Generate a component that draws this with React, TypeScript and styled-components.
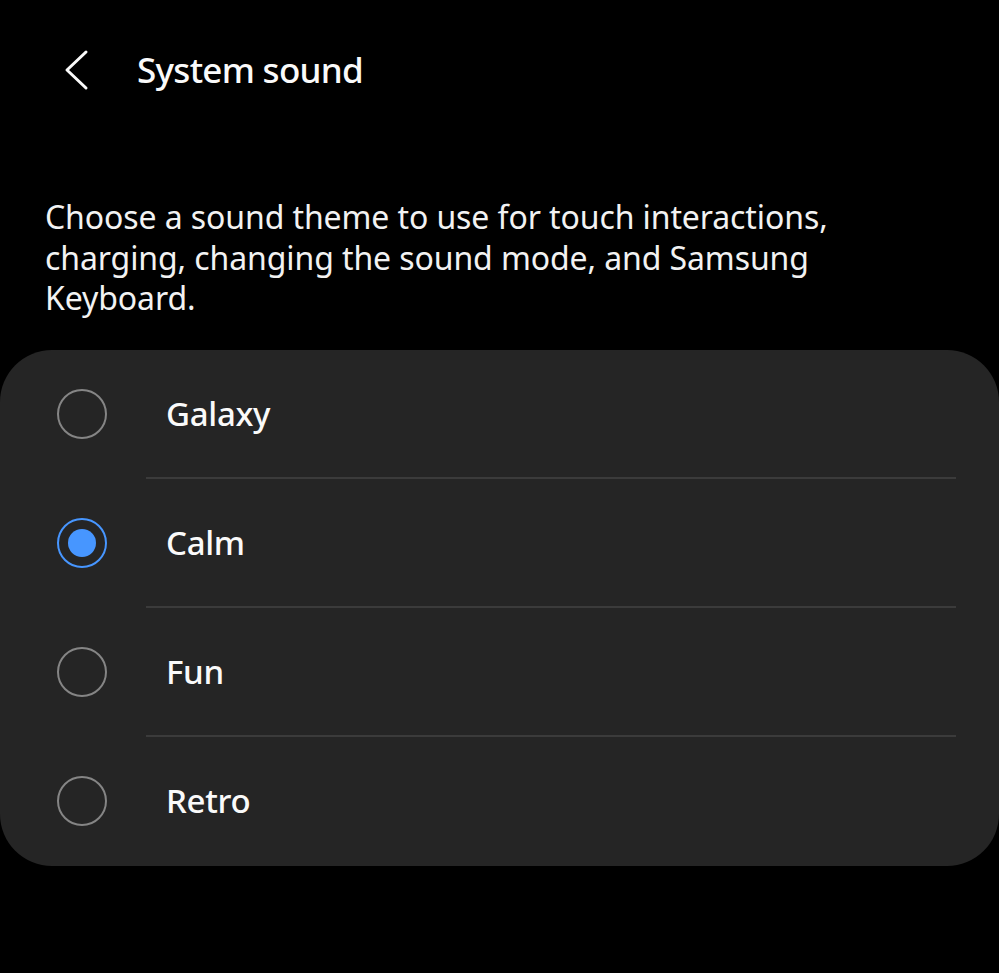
import React, { useState } from "react";
import styled, { createGlobalStyle } from "styled-components";

const Global = createGlobalStyle`
  html, body { margin: 0; padding: 0; background: #000; }
  body { font-family: "Noto Sans", "Open Sans", sans-serif; color: #fafafa; }
  * { box-sizing: border-box; }
`;

const Page = styled.div`
  width: 999px;
  height: 973px;
  background: #000;
  display: flex;
  flex-direction: column;
`;

const Header = styled.header`
  height: 140px;
  display: flex;
  align-items: flex-start;
  padding-top: 44px;
  padding-left: 60px;
`;

const BackButton = styled.button`
  width: 32px;
  height: 52px;
  padding: 0;
  border: none;
  background: transparent;
  display: flex;
  align-items: center;
  justify-content: center;
  cursor: pointer;
  margin-right: 45px;
`;

const Title = styled.h1`
  margin: 0;
  font-size: 35px;
  line-height: 52px;
  font-weight: 500;
  color: #fafafa;
  letter-spacing: -0.7px;
`;

const Description = styled.p`
  margin: 0;
  padding: 57px 0 0 45px;
  width: 905px;
  font-size: 32px;
  line-height: 40.5px;
  color: #f2f2f2;
  font-weight: 400;
  letter-spacing: -0.1px;
  height: 210px;
`;

const Card = styled.div`
  background: #252525;
  border-radius: 52px;
  width: 999px;
  height: 516px;
  display: flex;
  flex-direction: column;
`;

const Row = styled.div`
  height: 127px;
  display: flex;
  align-items: center;
  padding-left: 57px;
  cursor: pointer;
`;

const Divider = styled.div`
  height: 2px;
  background: #3b3b3b;
  margin: 0 43px 0 146px;
`;

const Radio = styled.span<{ $checked: boolean }>`
  width: 50px;
  height: 50px;
  border-radius: 50%;
  border: 2.5px solid ${(p) => (p.$checked ? "#4796ff" : "#858585")};
  display: flex;
  align-items: center;
  justify-content: center;
  flex-shrink: 0;
  margin-right: 59px;

  &::after {
    content: "";
    width: 28px;
    height: 28px;
    border-radius: 50%;
    background: #4796ff;
    display: ${(p) => (p.$checked ? "block" : "none")};
  }
`;

const Label = styled.span`
  font-size: 33px;
  font-weight: 500;
  color: #fafafa;
  letter-spacing: -0.3px;
`;

const options = ["Galaxy", "Calm", "Fun", "Retro"];

export default function App() {
  const [selected, setSelected] = useState("Calm");
  return (
    <>
      <Global />
      <Page>
        <Header>
          <BackButton aria-label="Back">
            <svg width="32" height="52" viewBox="0 0 32 52" fill="none">
              <path d="M26 8 L7 26 L26 44" stroke="#fafafa" strokeWidth="3" strokeLinecap="round" strokeLinejoin="round" />
            </svg>
          </BackButton>
          <Title>System sound</Title>
        </Header>
        <Description>
          Choose a sound theme to use for touch interactions, charging, changing the sound mode, and Samsung Keyboard.
        </Description>
        <Card>
          {options.map((o, i) => (
            <React.Fragment key={o}>
              {i > 0 && <Divider />}
              <Row onClick={() => setSelected(o)}>
                <Radio $checked={selected === o} />
                <Label>{o}</Label>
              </Row>
            </React.Fragment>
          ))}
        </Card>
      </Page>
    </>
  );
}
